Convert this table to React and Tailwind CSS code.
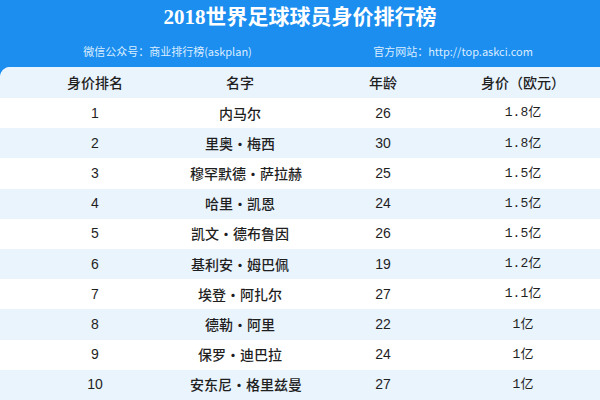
import React from "react";

const rows = [
  ["1", "内马尔", "26", "1.8亿"],
  ["2", "里奥·梅西", "30", "1.8亿"],
  ["3", "穆罕默德·萨拉赫", "25", "1.5亿"],
  ["4", "哈里·凯恩", "24", "1.5亿"],
  ["5", "凯文·德布鲁因", "26", "1.5亿"],
  ["6", "基利安·姆巴佩", "19", "1.2亿"],
  ["7", "埃登·阿扎尔", "27", "1.1亿"],
  ["8", "德勒·阿里", "22", "1亿"],
  ["9", "保罗·迪巴拉", "24", "1亿"],
  ["10", "安东尼·格里兹曼", "27", "1亿"],
];

const App = () => {
  return (
    <div className="w-[600px] h-[400px] overflow-hidden bg-[#1b8ef0] text-[#1f1f1f] font-['Noto_Sans_CJK_SC','Noto_Sans',sans-serif]">
      {/* header */}
      <div className="h-[67px] flex flex-col items-center">
        <h1 className="mt-[4px] text-[21px] leading-[26px] font-bold text-white font-['Liberation_Serif','Noto_Sans_CJK_SC',serif]">
          2018世界足球球员身价排行榜
        </h1>
        <div className="w-full flex mt-[13px] text-[11px] leading-[16px] text-[#dcedff]">
          <div className="w-[335px] text-center">微信公众号：商业排行榜(askplan)</div>
          <div className="w-[236px] text-center">
            官方网站：http://top.askci.com
          </div>
        </div>
      </div>

      {/* table */}
      <div className="bg-white rounded-tl-[10px] overflow-hidden">
        <div className="grid grid-cols-[190px_100px_186px_94px] h-[31px] items-center bg-[#eaf4fd] text-[14px] font-medium text-center">
          <div>身价排名</div>
          <div>名字</div>
          <div>年龄</div>
          <div>身价（欧元）</div>
        </div>
        {rows.map((r, i) => (
          <div
            key={i}
            className={
              "grid grid-cols-[190px_100px_186px_94px] h-[30.2px] items-center text-center text-[14px] " +
              (i % 2 === 1 ? "bg-[#eaf4fd]" : "bg-white")
            }
          >
            <div className="font-['Liberation_Sans','Noto_Sans_CJK_SC',sans-serif]">{r[0]}</div>
            <div className="whitespace-nowrap font-medium">{r[1]}</div>
            <div className="font-['Liberation_Sans','Noto_Sans_CJK_SC',sans-serif]">{r[2]}</div>
            <div className="text-[13px] font-['Liberation_Mono','Noto_Sans_CJK_SC',monospace]">
              {r[3]}
            </div>
          </div>
        ))}
      </div>
    </div>
  );
};

export default App;
